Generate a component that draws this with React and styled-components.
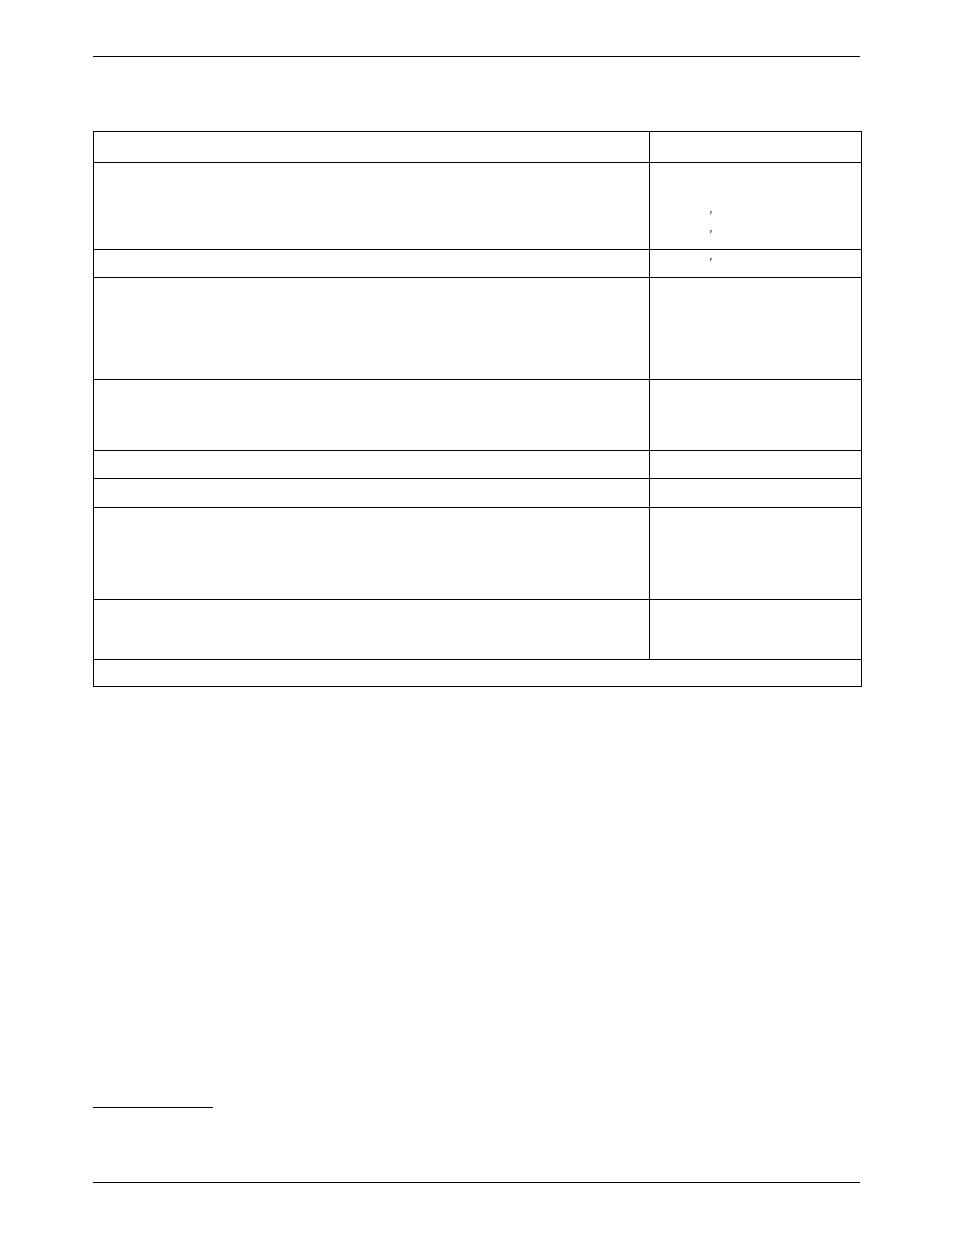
import styled, { createGlobalStyle } from "styled-components";

const GlobalStyle = createGlobalStyle`
  html, body {
    margin: 0;
    padding: 0;
    background: #fff;
    font-family: "Liberation Sans", Arial, sans-serif;
  }
`;

// heights between the ruled lines of the table, top to bottom
const rows = [
  { h: 31, marks: [] },
  { h: 87, marks: [46, 19] },
  { h: 28, marks: [6] },
  { h: 102, marks: [] },
  { h: 71, marks: [] },
  { h: 28, marks: [] },
  { h: 29, marks: [] },
  { h: 92, marks: [] },
  { h: 60, marks: [] },
];

function App() {
  return (
    <>
      <GlobalStyle />
      <Page>
        <Rule $width={767} />

        <Table>
          {rows.map((row, i) => (
            <Row key={i} $h={row.h}>
              <Cell />
              <Cell>
                {row.marks.map((gap, j) => (
                  <Mark key={j} $gap={gap}>
                    ′
                  </Mark>
                ))}
              </Cell>
            </Row>
          ))}
          <Row $h={27}>
            <WideCell />
          </Row>
        </Table>

        <FootRule />
        <Rule $width={767} $top={74} />
      </Page>
    </>
  );
}

export default App;

const Page = styled.div`
  width: 954px;
  min-height: 1235px;
  box-sizing: border-box;
  padding: 56px 0 0 93px;
  display: flex;
  flex-direction: column;
`;

const Rule = styled.div`
  width: ${({ $width }) => $width}px;
  height: 1px;
  background: #000;
  margin-top: ${({ $top }) => $top || 0}px;
`;

const FootRule = styled.div`
  width: 120px;
  height: 1px;
  background: #000;
  margin-top: 420px;
`;

const Table = styled.div`
  margin-top: 74px;
  width: 769px;
  box-sizing: border-box;
  border-top: 1px solid #000;
  border-left: 1px solid #000;
  display: flex;
  flex-direction: column;
`;

const Row = styled.div`
  display: grid;
  grid-template-columns: 556px 212px;
  height: ${({ $h }) => $h}px;
`;

const Cell = styled.div`
  box-sizing: border-box;
  border-right: 1px solid #000;
  border-bottom: 1px solid #000;
  display: flex;
  flex-direction: column;
  align-items: flex-start;
  padding-left: 59px;
`;

const WideCell = styled(Cell)`
  grid-column: 1 / span 2;
`;

const Mark = styled.span`
  display: block;
  margin-top: ${({ $gap }) => $gap}px;
  height: 0;
  font-size: 13px;
  line-height: 13px;
  font-style: italic;
  color: #333;
  will-change: transform;
`;
